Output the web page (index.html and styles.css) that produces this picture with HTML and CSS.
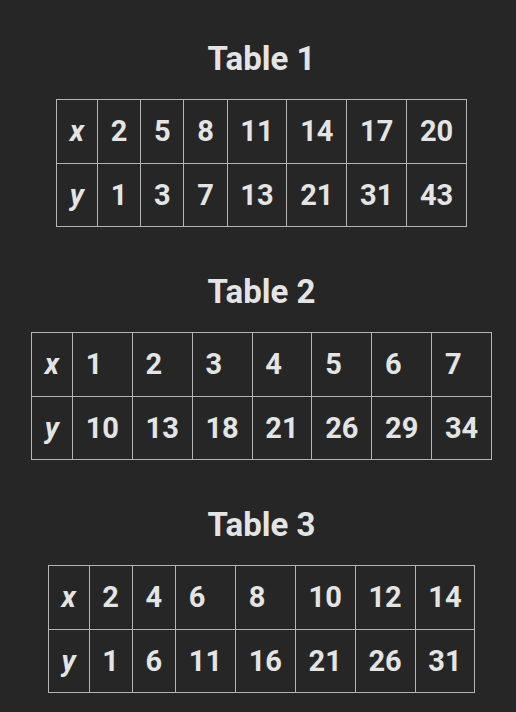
FILE: index.html
```html
<!DOCTYPE html>
<html>
<head>
<meta charset="utf-8">
<link rel="stylesheet" href="styles.css">
</head>
<body>
<main class="page">
  <section class="block">
    <h2 class="title">Table 1</h2>
    <table class="data">
      <tr><th>x</th><td>2</td><td>5</td><td>8</td><td>11</td><td>14</td><td>17</td><td>20</td></tr>
      <tr><th>y</th><td>1</td><td>3</td><td>7</td><td>13</td><td>21</td><td>31</td><td>43</td></tr>
    </table>
  </section>
  <section class="block">
    <h2 class="title">Table 2</h2>
    <table class="data">
      <tr><th>x</th><td>1</td><td>2</td><td>3</td><td>4</td><td>5</td><td>6</td><td>7</td></tr>
      <tr><th>y</th><td>10</td><td>13</td><td>18</td><td>21</td><td>26</td><td>29</td><td>34</td></tr>
    </table>
  </section>
  <section class="block">
    <h2 class="title">Table 3</h2>
    <table class="data">
      <tr><th>x</th><td>2</td><td>4</td><td>6</td><td>8</td><td>10</td><td>12</td><td>14</td></tr>
      <tr><th>y</th><td>1</td><td>6</td><td>11</td><td>16</td><td>21</td><td>26</td><td>31</td></tr>
    </table>
  </section>
</main>
</body>
</html>
```

FILE: styles.css
```css
html, body {
  margin: 0;
  padding: 0;
  background: #262626;
}
body {
  font-family: Roboto, "Liberation Sans", sans-serif;
  color: #e4e4e4;
}
.page {
  display: flex;
  flex-direction: column;
  align-items: center;
  padding: 40px 0 0 7px;
}
.block {
  display: flex;
  flex-direction: column;
  align-items: center;
  margin-bottom: 46px;
}
.title {
  margin: 0 0 21px 0;
  font-size: 33px;
  line-height: 38px;
  font-weight: 700;
}
.data {
  border-collapse: collapse;
  font-size: 29px;
  font-weight: 700;
}
.data th, .data td {
  border: 1px solid #b4b4b4;
  padding: 15px 12.8px;
  line-height: 32.5px;
  text-align: left;
}
.data th {
  font-style: italic;
}
```
